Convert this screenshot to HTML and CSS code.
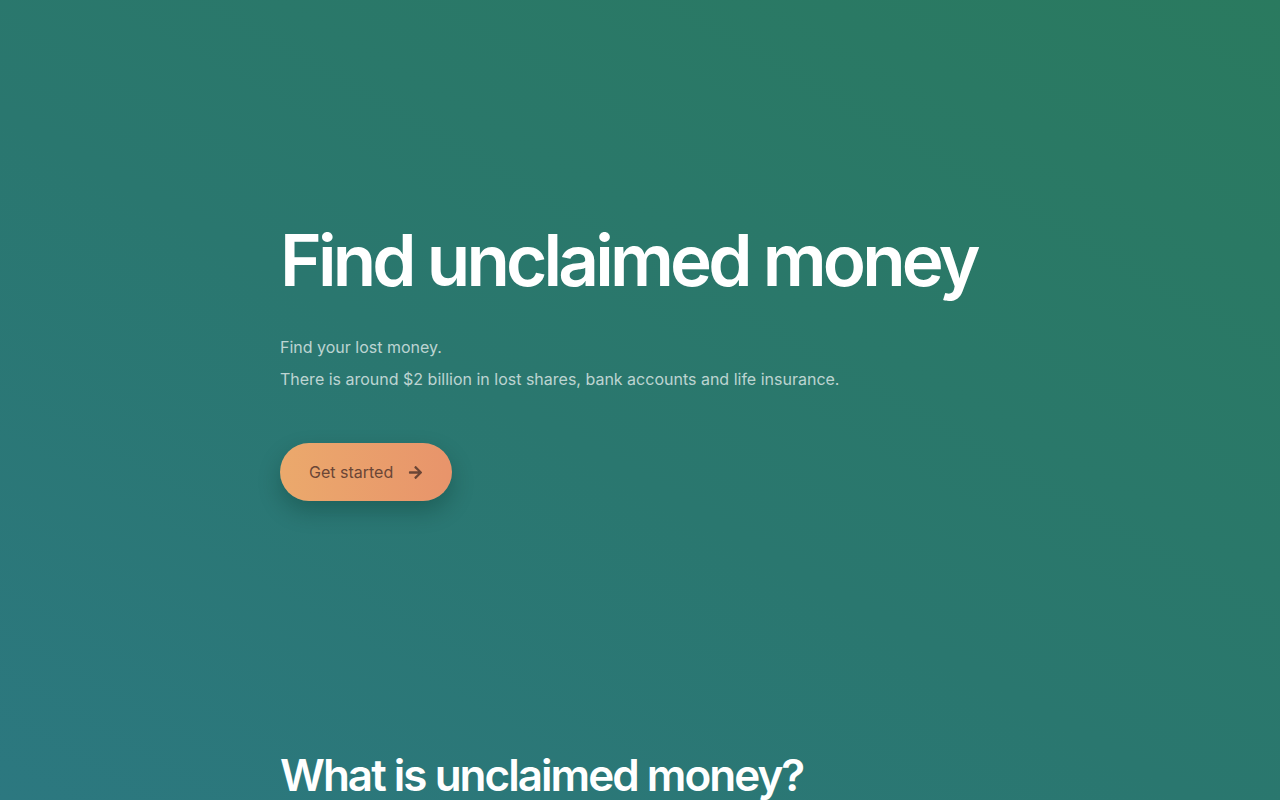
FILE: index.html
```html
<!DOCTYPE html>
<html lang="en">
<head>
<meta charset="utf-8">
<title>Find unclaimed money</title>
<link rel="stylesheet" href="styles.css">
</head>
<body>
<main class="page">
  <section class="hero">
    <h1 class="hero-title">Find unclaimed money</h1>
    <div class="hero-text">
      <p>Find your lost money.</p>
      <p>There is around $2 billion in lost shares, bank accounts and life insurance.</p>
    </div>
    <a class="cta" href="#">
      <span>Get started</span>
      <svg class="cta-icon" viewBox="0 0 448 512" width="15" height="15" aria-hidden="true"><path fill="currentColor" d="M190.5 66.9l22.2-22.2c9.4-9.4 24.6-9.4 33.9 0L441 239c9.4 9.4 9.4 24.6 0 33.9L246.6 467.3c-9.4 9.4-24.6 9.4-33.9 0l-22.2-22.2c-9.5-9.5-9.3-25 .4-34.3L311.4 296H24c-13.3 0-24-10.7-24-24v-32c0-13.3 10.7-24 24-24h287.4L190.9 101.2c-9.8-9.3-10-24.8-.4-34.3z"/></svg>
    </a>
  </section>
  <section class="about">
    <h2 class="about-title">What is unclaimed money?</h2>
  </section>
</main>
</body>
</html>
```
FILE: styles.css
```css
html, body {
  margin: 0;
  padding: 0;
}
body {
  min-height: 100vh;
  background: linear-gradient(30deg, #2c7880 0%, #2a776f 45%, #2a7a5f 100%);
  font-family: Inter, "Noto Sans", sans-serif;
  color: #fff;
  overflow: hidden;
}
.page {
  width: 720px;
  margin: 0 auto;
  box-sizing: border-box;
}
.hero {
  padding-top: 220px;
}
.hero-title {
  margin: 0;
  font-size: 71px;
  line-height: 80px;
  font-weight: 600;
  letter-spacing: -0.054em;
  white-space: nowrap;
}
.hero-text {
  margin-top: 35px;
  color: rgba(255, 255, 255, 0.7);
  font-size: 16px;
  line-height: 24px;
}
.hero-text p {
  margin: 0 0 8px;
}
.cta {
  margin-top: 44px;
  display: inline-flex;
  align-items: center;
  gap: 15px;
  height: 58px;
  padding: 0 29px;
  border-radius: 29px;
  background: linear-gradient(90deg, #eba96c, #e8946b);
  color: #6b4636;
  text-decoration: none;
  font-size: 16px;
  box-shadow: 0 10px 22px rgba(0, 40, 30, 0.28);
}
.cta-icon {
  display: block;
}
.about {
  padding-top: 248px;
}
.about-title {
  margin: 0;
  font-size: 44px;
  line-height: 52px;
  font-weight: 600;
  letter-spacing: -0.045em;
}
```
